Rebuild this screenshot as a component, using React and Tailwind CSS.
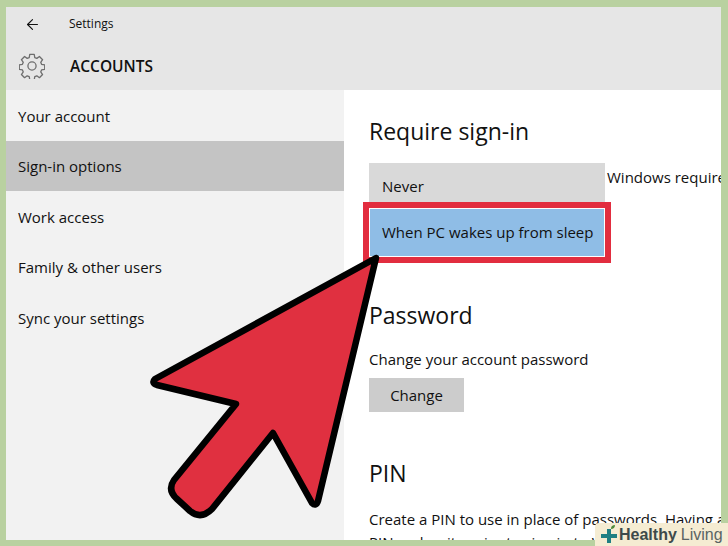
import { ArrowLeft } from 'lucide-react';

const navItems = ['Your account', 'Sign-in options', 'Work access', 'Family & other users', 'Sync your settings'];

function Gear() {
  return (
    <svg width="26" height="26" viewBox="0 0 28 28" fill="none" stroke="#6e6e6e" strokeWidth="1.4" strokeLinejoin="round">
      <circle cx="14" cy="14" r="4.4" />
      <path d="M11.6 1.5h4.8l.6 3.4 2.2.9 2.8-2 3.4 3.4-2 2.8.9 2.2 3.4.6v4.8l-3.4.6-.9 2.2 2 2.8-3.4 3.4-2.8-2-2.2.9-.6 3.4h-4.8l-.6-3.4-2.2-.9-2.8 2-3.4-3.4 2-2.8-.9-2.2-3.4-.6v-4.8l3.4-.6.9-2.2-2-2.8 3.4-3.4 2.8 2 2.2-.9z" />
    </svg>
  );
}

function Arrow() {
  return (
    <svg className="absolute left-0 top-0" width="728" height="546" viewBox="0 0 728 546">
      <path
        d="M376 258 L155 379 Q151 383 157 385 L236 404 L174 480 Q167 490 177 499 L190 511 Q201 520 212 509 L273 433 L312 503 Q316 507 318 501 Z"
        fill="#e03040"
        stroke="#000"
        strokeWidth="6.5"
        strokeLinejoin="round"
      />
    </svg>
  );
}

export default function App() {
  return (
    <div className="relative h-[546px] w-[728px] overflow-hidden bg-[#b9d1a0] pb-[6px] pl-[6px] pr-[7px] pt-[7px] font-['Open_Sans',sans-serif] text-[#111]">
      <div className="flex h-full flex-col overflow-hidden bg-white">
        <header className="h-[83px] shrink-0 bg-[#e6e6e6]">
          <div className="flex h-[33px] items-center pl-[18px] pt-[1px]">
            <ArrowLeft size={17} strokeWidth={1.6} className="text-[#111]" />
            <span className="ml-[28px] text-[12px]">Settings</span>
          </div>
          <div className="flex items-center pl-[13px] pt-[13px]">
            <Gear />
            <span className="ml-[25px] pt-[2px] text-[15.5px] font-semibold">ACCOUNTS</span>
          </div>
        </header>
        <div className="flex min-h-0 flex-1">
          <nav className="w-[338px] shrink-0 bg-[#f2f2f2]">
            {navItems.map((item) => (
              <div
                key={item}
                className={`flex h-[50.6px] items-center pl-[12px] pt-[1px] text-[15px] ${item === 'Sign-in options' ? 'bg-[#c4c4c4]' : ''}`}
              >
                {item}
              </div>
            ))}
          </nav>
          <main className="min-w-0 flex-1 overflow-hidden pl-[25px] pt-[25px]">
            <h2 className="text-[23px] leading-[32px]">Require sign-in</h2>
            <div className="mt-[16px] flex items-start">
              <div className="w-[236px] shrink-0">
                <div className="h-[39px] bg-[#d9d9d9] pl-[13px] pt-[13px] text-[15px] leading-[20px]">Never</div>
                <div className="-ml-[6px] -mr-[6px] border-[6px] border-[#e22d3f] bg-white p-[1px]">
                  <div className="flex h-[47px] items-center bg-[#8fbde6] pl-[12px] text-[15px]">
                    When PC wakes up from sleep
                  </div>
                </div>
              </div>
              <span className="ml-[2px] whitespace-nowrap text-[15px] leading-[28px]">Windows requires</span>
            </div>
            <h2 className="mt-[36px] text-[23px] leading-[32px]">Password</h2>
            <p className="mt-[18px] text-[15px] leading-[20px]">Change your account password</p>
            <button className="mt-[9px] block h-[34px] w-[95px] bg-[#cccccc] text-[15px]">Change</button>
            <h2 className="mt-[45px] text-[23px] leading-[32px]">PIN</h2>
            <p className="mt-[19px] w-[360px] text-[15px] leading-[23px]">
              Create a PIN to use in place of passwords. Having a PIN makes it easier to sign in to Windows
            </p>
          </main>
        </div>
      </div>
      <Arrow />
      <div className="absolute bottom-0 right-0 flex h-[23px] w-[133px] items-center rounded-tl-[4px] bg-[#f5ecd2] pl-[4px] font-['Liberation_Sans',sans-serif] text-[16px] leading-none">
        <svg width="20" height="20" viewBox="0 0 20 20" className="shrink-0">
          <path d="M8 4h4v5h6v4h-6v5H8v-5H2V9h6z" fill="#1f7f83" />
          <path d="M12 4c0-3 1.500-4 4-4 0 2.500-1.500 4-4 4z" fill="#4d8a3a" />
        </svg>
        <span className="font-bold text-[#3d4a4a]">Healthy</span>
        <span className="ml-[4px] text-[#5a6464]">Living</span>
      </div>
    </div>
  );
}
